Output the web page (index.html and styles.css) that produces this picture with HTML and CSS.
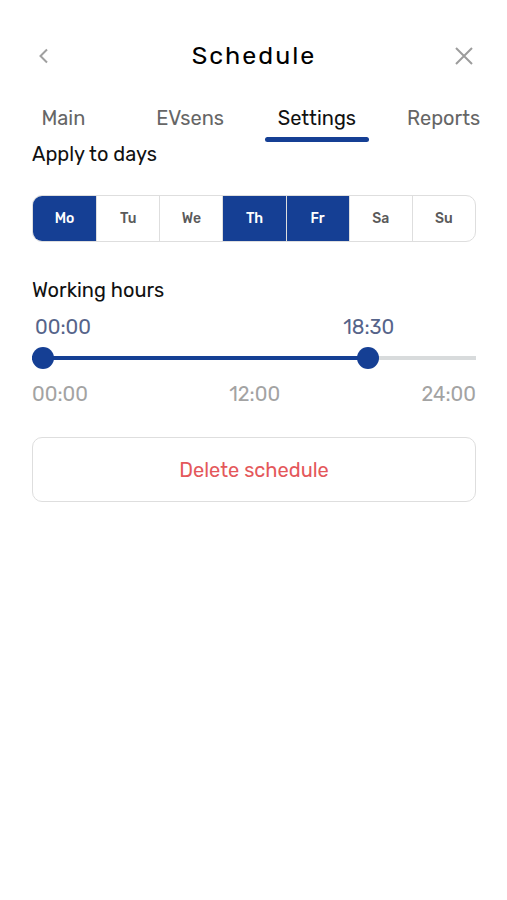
FILE: index.html
```html
<!DOCTYPE html>
<html lang="en">
<head>
  <meta charset="UTF-8">
  <meta name="viewport" content="width=device-width, initial-scale=1.0">
  <title>Schedule</title>
  <link rel="stylesheet" href="styles.css">
</head>
<body>

  <header class="header">
    <button class="icon-button" type="button" aria-label="Back">
      <svg width="24" height="24" viewBox="0 0 24 24"><path d="M15 5.5 8.5 12 15 18.5" fill="none" stroke="#a0a0a0" stroke-width="2"/></svg>
    </button>
    <h1>Schedule</h1>
    <button class="icon-button" type="button" aria-label="Close">
      <svg width="24" height="24" viewBox="0 0 24 24"><path d="M4 4 20 20M20 4 4 20" fill="none" stroke="#9c9c9c" stroke-width="2"/></svg>
    </button>
  </header>

  <nav class="tabs">
    <a href="#main">Main</a>
    <a href="#evsens">EVsens</a>
    <a class="active" href="#settings" aria-current="page">Settings</a>
    <a href="#reports">Reports</a>
  </nav>

  <main class="content">
    <!-- days -->
    <h2 id="days-title">Apply to days</h2>
    <div class="days" role="group" aria-labelledby="days-title">
      <label class="day"><input type="checkbox" checked><span>Mo</span></label>
      <label class="day"><input type="checkbox"><span>Tu</span></label>
      <label class="day"><input type="checkbox"><span>We</span></label>
      <label class="day"><input type="checkbox" checked><span>Th</span></label>
      <label class="day"><input type="checkbox" checked><span>Fr</span></label>
      <label class="day"><input type="checkbox"><span>Sa</span></label>
      <label class="day"><input type="checkbox"><span>Su</span></label>
    </div>

    <!-- hours -->
    <h2>Working hours</h2>
    <div class="hours" id="hours" style="--from: 0; --to: 0.7708">
      <div class="values">
        <label for="from" id="from-text">00:00</label>
        <label for="to" id="to-text">18:30</label>
      </div>
      <div class="slider">
        <input type="range" id="from" min="0" max="24" step="0.5" value="0">
        <input type="range" id="to" min="0" max="24" step="0.5" value="18.5">
      </div>
      <div class="scale">
        <span>00:00</span>
        <span>12:00</span>
        <span>24:00</span>
      </div>
    </div>

    <button class="delete" type="button">Delete schedule</button>
  </main>

  <script>
    const hours = document.getElementById('hours');
    const from = document.getElementById('from');
    const to = document.getElementById('to');

    function formatTime(value) {
      const h = String(Math.floor(value)).padStart(2, '0');
      return h + (value % 1 ? ':30' : ':00');
    }

    function updateHours() {
      hours.style.setProperty('--from', from.value / 24);
      hours.style.setProperty('--to', to.value / 24);
      document.getElementById('from-text').textContent = formatTime(Number(from.value));
      document.getElementById('to-text').textContent = formatTime(Number(to.value));
    }

    from.addEventListener('input', function() {
      from.value = Math.min(from.value, to.value);
      updateHours();
    });
    to.addEventListener('input', function() {
      to.value = Math.max(from.value, to.value);
      updateHours();
    });
  </script>

</body>
</html>
```
FILE: styles.css
```css
* {
  box-sizing: border-box;
}
body {
  margin: 0;
  background-color: #fff;
  color: #111;
  font-family: Rubik, Roboto, sans-serif;
  font-size: 20px;
  line-height: 24px;
}
button {
  font: inherit;
  cursor: pointer;
}
.header {
  display: flex;
  justify-content: space-between;
  align-items: center;
  padding: 40px 31px 0 32px;
}
.header h1 {
  margin: 0;
  font-size: 25px;
  line-height: 32px;
  font-weight: 400;
  letter-spacing: 2px;
  color: #000;
}
.icon-button {
  display: flex;
  padding: 0;
  border: none;
  background: none;
}
.tabs {
  display: grid;
  grid-template-columns: repeat(4, 1fr);
  padding-top: 34px;
}
.tabs a {
  margin: 0 11px;
  text-align: center;
  text-decoration: none;
  color: #666;
}
.tabs a::after {
  content: "";
  display: block;
  height: 5px;
  margin-top: 7px;
  border-radius: 3px;
}
.tabs .active {
  color: #111;
}
.tabs .active::after {
  background-color: #153f94;
}
.content {
  padding: 0 31px 0 32px;
}
.content h2 {
  margin: 0;
  font-size: 20px;
  line-height: 24px;
  font-weight: 400;
}
.days {
  display: grid;
  grid-template-columns: repeat(7, 1fr);
  height: 47px;
  margin: 29px 0 36px;
  border: 1px solid #dedede;
  border-radius: 10px;
  overflow: hidden;
}
.day {
  position: relative;
  display: flex;
  font-size: 14px;
  font-weight: 500;
  color: #5a5a5a;
}
.day + .day {
  border-left: 1px solid #dedede;
}
.day input {
  position: absolute;
  opacity: 0;
}
.day span {
  flex: 1;
  display: flex;
  align-items: center;
  justify-content: center;
}
.day input:checked + span {
  background-color: #153f94;
  color: #fff;
}
.values {
  display: flex;
  justify-content: space-between;
  width: calc(var(--to) * (100% - 22px) + 37px);
  margin-top: 13px;
  padding-left: calc(var(--from) * (100% - 22px) + 3px);
  color: #56648a;
}
.slider {
  display: grid;
  margin-top: 8px;
  background: linear-gradient(#153f94, #153f94) calc(var(--from) * 100%) center / calc((var(--to) - var(--from)) * 100%) 4px no-repeat,
    linear-gradient(#d8dbdc, #d8dbdc) center / 100% 4px no-repeat;
}
.slider input {
  grid-area: 1 / 1;
  appearance: none;
  width: 100%;
  height: 22px;
  margin: 0;
  background: none;
  pointer-events: none;
}
.slider input::-webkit-slider-thumb {
  appearance: none;
  width: 22px;
  height: 22px;
  border-radius: 50%;
  background-color: #153f94;
  pointer-events: auto;
  cursor: pointer;
}
.scale {
  display: flex;
  justify-content: space-between;
  margin-top: 13px;
  color: #a3a3a3;
}
.delete {
  width: 100%;
  height: 65px;
  margin-top: 31px;
  border: 1px solid #dedede;
  border-radius: 10px;
  background-color: #fff;
  color: #e4585b;
}
```
